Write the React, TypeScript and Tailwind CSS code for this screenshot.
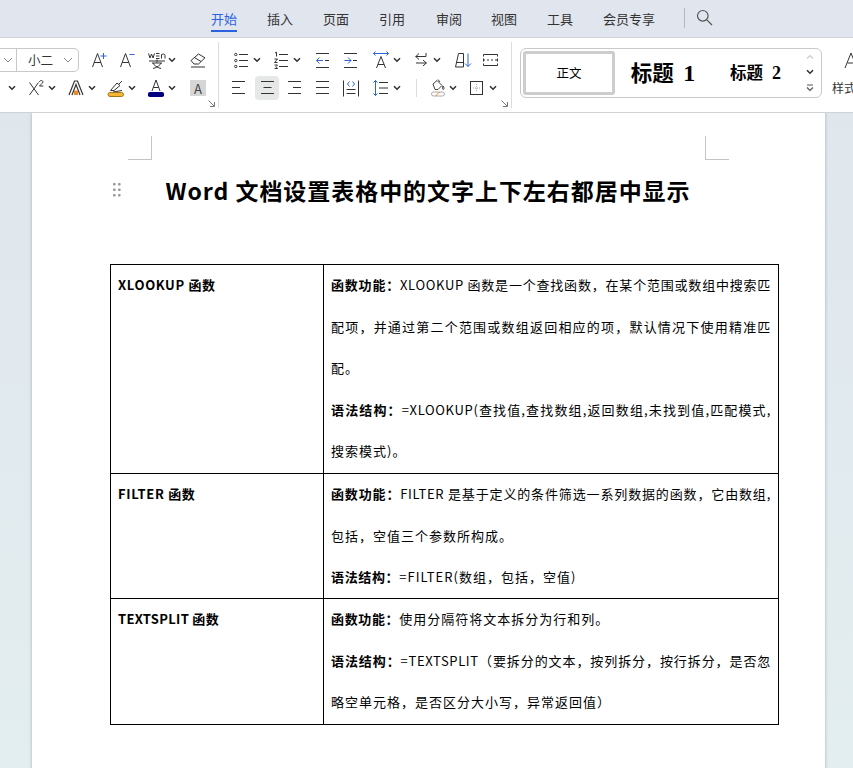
import React from "react";

const S = ({ w = 14, h = 20, children }: { w?: number; h?: number; children: React.ReactNode }) => (
  <svg width={w} height={h} viewBox={`0 0 ${w} ${h}`} fill="none" stroke="#333" strokeWidth="1" className="block shrink-0">
    {children}
  </svg>
);
const Caret = () => (
  <svg width="8" height="6" viewBox="0 0 8 6" fill="none" stroke="#333" strokeWidth="1.6" className="block shrink-0">
    <path d="M1 1.2 4 4.2 7 1.2" />
  </svg>
);
const Thin = () => (
  <svg width="10" height="6" viewBox="0 0 10 6" fill="none" stroke="#888" strokeWidth="1" className="block shrink-0">
    <path d="M1 1 5 5 9 1" />
  </svg>
);
const Lines = ({ d }: { d: string }) => (
  <S w={13}>
    <path d={d} />
  </S>
);

const Tab = ({ t, active, w }: { t: string; active?: boolean; w: string }) => (
  <div className={`relative h-[37px] flex items-center text-[13px] ${w} ${active ? "text-[#2a62e0]" : "text-[#333]"}`}>
    {t}
    {active && <div className="absolute left-0 right-0 top-[30px] h-[2px] bg-[#2a62e0]" />}
  </div>
);

const Launcher = () => (
  <svg width="7" height="7" viewBox="0 0 7 7" fill="none" stroke="#777" strokeWidth="1" className="absolute right-[3px] bottom-[1px]">
    <path d="M0.5 0.5 6 6M6.5 2v4.5H2" />
  </svg>
);

const Row = ({ children, cls = "" }: { children: React.ReactNode; cls?: string }) => (
  <div className={`flex items-center h-[24px] ${cls}`}>{children}</div>
);

const Line = ({ children, j }: { children: React.ReactNode; j?: boolean }) => (
  <div className={`h-[41.6px] leading-[41.6px] whitespace-nowrap ${j ? "text-justify [text-align-last:justify]" : ""}`}>{children}</div>
);
const B = ({ children }: { children: React.ReactNode }) => <span className="font-bold">{children}</span>;
const W = ({ children }: { children: React.ReactNode }) => <span className="tracking-[1px]">{children}</span>;

const Dots = () => (
  <svg width="8" height="14" viewBox="0 0 8 14" fill="#9a9a9a" className="block">
    {[1, 6.5, 12].map((y) => (
      <g key={y}>
        <rect x="0" y={y - 1} width="2.6" height="2.6" rx="0.8" />
        <rect x="5" y={y - 1} width="2.6" height="2.6" rx="0.8" />
      </g>
    ))}
  </svg>
);

export default function App() {
  return (
    <div
      className="h-[768px] w-[853px] overflow-hidden flex flex-col bg-gradient-to-b from-[#dfe5ec] to-[#e3eef0] text-black"
      style={{ fontFamily: '"Noto Sans CJK SC", "Noto Sans", sans-serif' }}
    >
      {/* tabs */}
      <div className="h-[38px] shrink-0 bg-[#e1e5ed] border-b border-[#cfd2d8] flex items-start pl-[211px]">
        <Tab t="开始" active w="w-[26px] mr-[30px]" />
        <Tab t="插入" w="w-[26px] mr-[30px]" />
        <Tab t="页面" w="w-[26px] mr-[30px]" />
        <Tab t="引用" w="w-[26px] mr-[31px]" />
        <Tab t="审阅" w="w-[26px] mr-[29px]" />
        <Tab t="视图" w="w-[26px] mr-[30px]" />
        <Tab t="工具" w="w-[26px] mr-[30px]" />
        <Tab t="会员专享" w="w-[52px] mr-[29px]" />
        <div className="w-px h-[20px] mt-[8px] bg-[#b5b8be] mr-[11px]" />
        <div className="mt-[9px]">
          <svg width="17" height="17" viewBox="0 0 17 17" fill="none" stroke="#555" strokeWidth="1.2" className="block">
            <circle cx="6.8" cy="6.8" r="5.3" />
            <path d="M10.8 10.8 16 16" />
          </svg>
        </div>
      </div>

      {/* ribbon */}
      <div className="h-[75px] shrink-0 bg-white border-b border-[#cfd2d6] flex overflow-hidden relative z-10">
        {/* group 1 */}
        <div className="relative w-[219px] shrink-0 border-r border-[#dcdcdc] my-[4px] pt-[6px]">
          <Row>
            <div className="w-[79px] h-[24px] shrink-0 border border-l-0 border-[#c8c8c8] rounded-r-[5px] flex items-center text-[12.5px] text-[#333]">
              <div className="w-[17px] h-full border-r border-[#c8c8c8] flex items-center pl-[3px]"><Thin /></div>
              <span className="ml-[11px] w-[35px]">小二</span>
              <Thin />
            </div>
            <div className="w-[12px] shrink-0" />
            <S w={16}>
              <path d="M1.5 17 6.500 3.500 11.500 17M3.200 12.500h6.600" />
              <path d="M9.500 6h6M12.500 3v6" stroke="#2a62e0" />
            </S>
            <div className="w-[12px] shrink-0" />
            <S w={16}>
              <path d="M1.500 17 6.500 3.500 11.500 17M3.200 12.500h6.600" />
              <path d="M10.500 4.500h5" stroke="#2a62e0" />
            </S>
            <div className="w-[12px] shrink-0" />
            <svg width="20" height="20" viewBox="0 0 20 20" fill="none" stroke="#333" className="block shrink-0">
              <path d="M1.500 3.500 3 8 4.500 4 6 8 7.500 3.500M9 3.500h3.500M9 6h3.500M9 8.500h3.500M14.500 8.500V4.500c1.500-.8 3.500-.5 3.500 1v3M2 11h16M10 9.500v3M5 13h10M6 13c1 2.500 4 4.500 8 5.500M14 13c-1 2.500-4 4.500-8 5.500" />
            </svg>
            <div className="w-[1px] shrink-0" />
            <Caret />
            <div className="w-[13px] shrink-0" />
            <svg width="18" height="18" viewBox="0 0 18 18" fill="none" stroke="#333" className="block shrink-0">
              <path d="M2 9.500 9.500 3l6.500 3.800-6.500 6.200H5zM5.500 6.500l6.500 4M2 16h14" />
            </svg>
          </Row>
          <Row cls="mt-[4px]">
            <div className="w-[8px] shrink-0" />
            <Caret />
            <div className="w-[12px] shrink-0" />
            <svg width="16" height="20" viewBox="0 0 16 20" fill="none" stroke="#333" className="block shrink-0">
              <path d="M1.500 4.500 10.500 17M10.500 4.500 1.500 17" />
              <path d="M11.500 4c0-2 3.500-2 3.500 0 0 1.300-2.500 2.200-3.500 4h3.800" />
            </svg>
            <div className="w-[4px] shrink-0" />
            <Caret />
            <div className="w-[11px] shrink-0" />
            <svg width="18" height="20" viewBox="0 0 18 20" fill="none" stroke="#333" className="block shrink-0">
              <path d="M2 17 7.500 3h3L16 17M5 17 9 6.500 13 17" strokeWidth="1.200" />
              <path d="M7 12.500h4V17H7z" fill="#e98a2b" stroke="none" />
            </svg>
            <div className="w-[3px] shrink-0" />
            <Caret />
            <div className="w-[11px] shrink-0" />
            <svg width="18" height="20" viewBox="0 0 18 20" fill="none" stroke="#333" className="block shrink-0">
              <path d="M3.500 12.500 10 5l3 2.500-6 5H3.500zM12 6l3-3M6 14l9-1.500" />
              <rect x="1" y="14.500" width="15.500" height="4" rx="2" fill="#f7b733" stroke="#a5761b" />
            </svg>
            <div className="w-[3px] shrink-0" />
            <Caret />
            <div className="w-[11px] shrink-0" />
            <svg width="18" height="20" viewBox="0 0 18 20" fill="none" stroke="#333" className="block shrink-0">
              <path d="M5 13 9 2l4 11M6.300 9.500h5.400" />
              <rect x="1" y="14" width="16" height="5" rx="1.800" fill="#000080" stroke="none" />
            </svg>
            <div className="w-[3px] shrink-0" />
            <Caret />
            <div className="w-[14px] shrink-0" />
            <div className="w-[16px] h-[16px] bg-[#d6d6d6] flex items-center justify-center text-[13px] text-[#444] leading-none">A</div>
          </Row>
          <Launcher />
        </div>

        {/* group 2 */}
        <div className="relative w-[293px] shrink-0 border-r border-[#dcdcdc] my-[4px] pt-[6px]">
          <Row>
            <div className="w-[15px] shrink-0" />
            <S w={14}>
              <path d="M5 4.500h9M5 10.500h9M5 16.500h9" />
              <circle cx="1.800" cy="4.500" r="1.200" />
              <circle cx="1.800" cy="10.500" r="1.200" />
              <circle cx="1.800" cy="16.500" r="1.200" />
            </S>
            <div className="w-[5px] shrink-0" />
            <Caret />
            <div className="w-[13px] shrink-0" />
            <S w={14}>
              <path d="M5 4.500h9M5 10.500h9M5 16.500h9M1 3l1.500-.8V6.500M.5 9h3L.5 12.500h3M.5 15h3l-1.500 1.500 1.500 2h-3" />
            </S>
            <div className="w-[5px] shrink-0" />
            <Caret />
            <div className="w-[15px] shrink-0" />
            <S w={13}>
              <path d="M0 3.500h13M9 10.500h4M0 17.500h13" />
              <path d="M7 10.500H.5M3.500 7.500l-3 3 3 3" stroke="#2a62e0" />
            </S>
            <div className="w-[15px] shrink-0" />
            <S w={13}>
              <path d="M0 3.500h13M9 10.500h4M0 17.500h13" />
              <path d="M.5 10.500H7M4 7.500l3 3-3 3" stroke="#2a62e0" />
            </S>
            <div className="w-[16px] shrink-0" />
            <S w={16}>
              <path d="M3.500 18 8 6.500 12.500 18M5 14.500h6" />
              <path d="M.5 3.500h15M2.500 1.500l-2 2 2 2M13.500 1.500l2 2-2 2" stroke="#2a62e0" />
            </S>
            <div className="w-[4px] shrink-0" />
            <Caret />
            <div className="w-[14px] shrink-0" />
            <S w={12}>
              <path d="M11 3v3.500H.5M4 3.500l-3.200 3 3.200 3M1 13h10.500M8 10l3.300 3-3.300 3" />
            </S>
            <div className="w-[6px] shrink-0" />
            <Caret />
            <div className="w-[14px] shrink-0" />
            <S w={17}>
              <path d="M.5 17 3.500 3.500h5V17h-8zM2 12.500h6.500" />
              <path d="M13 3.500V16.500M10 13.500l3 3 3-3" stroke="#2a62e0" />
            </S>
            <div className="w-[11px] shrink-0" />
            <S w={15}>
              <path d="M.5 4.500h14M.5 15.500h14M.5 4.500v2M14.500 4.500v2M.5 13.500v2M14.500 13.500v2M.5 10h1.500M4 10h2M8 10h2M12 10h2.500M.5 8.500v3M14.500 8.500v3" />
            </S>
          </Row>
          <Row cls="mt-[4px]">
            <div className="w-[13px] shrink-0" />
            <Lines d="M0 3.500h13M0 9.500h8M0 15.500h13" />
            <div className="w-[10px] shrink-0" />
            <div className="w-[24px] h-[24px] shrink-0 rounded-[4px] bg-[#e6e7e7] flex items-center justify-center">
              <Lines d="M0 3.500h13M2.500 9.500h8M0 15.500h13" />
            </div>
            <div className="w-[9px] shrink-0" />
            <Lines d="M0 3.500h13M5 9.500h8M0 15.500h13" />
            <div className="w-[15px] shrink-0" />
            <Lines d="M0 3.500h13M0 9.500h13M0 15.500h13" />
            <div className="w-[14px] shrink-0" />
            <S w={16}>
              <path d="M.5 2.500v16M15.500 2.500v16M3.500 11.500h9M3.500 15.500h9" />
              <path d="M6.500 3.500 4.500 6l2 2.500M9.500 3.500l2 2.500-2 2.500" stroke="#2a62e0" />
            </S>
            <div className="w-[14px] shrink-0" />
            <S w={15}>
              <path d="M6 4.500h9M6 10h9M6 15.500h9" />
              <path d="M2.500 2.500v15M.5 4.500l2-2 2 2M.5 15.500l2 2 2-2" stroke="#2a62e0" />
            </S>
            <div className="w-[5px] shrink-0" />
            <Caret />
            <div className="w-[15px] shrink-0" />
            <div className="w-px h-[18px] bg-[#dcdcdc] shrink-0" />
            <div className="w-[14px] shrink-0" />
            <svg width="14" height="20" viewBox="0 0 14 20" fill="none" stroke="#444" className="block shrink-0">
              <path d="M2 6 6 2.500l5 5-4 4H4zM7 1.500 9 4M12 8c1 1.500 1.500 3 .5 3.500S11 10 12 8z" />
              <rect x="0.500" y="14" width="13" height="4" rx="2" stroke="#aaa" />
              <path d="M4.500 18l4-4" stroke="#e98a2b" />
            </svg>
            <div className="w-[4px] shrink-0" />
            <Caret />
            <div className="w-[13px] shrink-0" />
            <svg width="13" height="14" viewBox="0 0 13 14" fill="none" stroke="#333" className="block shrink-0">
              <rect x="0.500" y="0.500" width="12" height="13" />
              <path d="M6.500 3v8M3 7h7" stroke="#aaa" strokeDasharray="1 1" />
            </svg>
            <div className="w-[6px] shrink-0" />
            <Caret />
          </Row>
          <Launcher />
        </div>

        {/* styles */}
        <div className="ml-[8px] mt-[10px] w-[302px] h-[50px] shrink-0 border border-[#c9c9c9] rounded-[6px] flex items-center pl-[2px]">
          <div className="w-[92px] h-[44px] border-[3px] border-[#cdcdcd] rounded-[3px] flex items-center justify-center text-[12.5px] text-black">
            正文
          </div>
          <div className="w-[93px] text-center text-[21.5px] font-bold whitespace-pre pl-[3px]" style={{ fontFamily: '"Liberation Serif", "Noto Sans CJK SC", serif' }}>
            标题 <span className="ml-[4px] text-[24px]">1</span>
          </div>
          <div className="w-[93px] text-center text-[16.5px] font-bold whitespace-pre pl-[2px]" style={{ fontFamily: '"Liberation Serif", "Noto Sans CJK SC", serif' }}>
            标题 <span className="ml-[5px] text-[18px]">2</span>
          </div>
          <div className="w-[10px] flex flex-col items-center gap-[9px] ml-[4px]">
            <svg width="8" height="6" viewBox="0 0 8 6" fill="none" stroke="#ccc" strokeWidth="1.2" className="block"><path d="M1 4.500 4 1.500l3 3" /></svg>
            <Caret />
            <svg width="8" height="8" viewBox="0 0 8 8" fill="none" stroke="#555" strokeWidth="1.2" className="block"><path d="M1 1h6M1 3.500 4 6.500l3-3" /></svg>
          </div>
        </div>

        {/* right cut off */}
        <div className="ml-[10px] mt-[8px] w-[30px] shrink-0 flex flex-col">
          <svg width="20" height="24" viewBox="0 0 20 24" fill="none" stroke="#333" className="block ml-[12px]">
            <path d="M1 22 7 7l6 15M3.500 17h7" />
          </svg>
          <div className="text-[12px] text-[#333] leading-[14px] mt-[11px] whitespace-nowrap">样式</div>
        </div>
      </div>

      {/* canvas */}
      <div className="flex-1 min-h-0 overflow-hidden pl-[32px]">
        <div className="relative w-[793px] h-[700px] bg-white shadow-[0_0_3px_rgba(120,130,140,0.6)] pt-[59px]">
          <div className="absolute left-[96px] top-[23px] w-[24px] h-[24px] border-r border-b border-[#c4c4c4]" />
          <div className="absolute left-[673px] top-[23px] w-[24px] h-[24px] border-l border-b border-[#c4c4c4]" />
          <div className="absolute left-[81px] top-[70px]"><Dots /></div>

          <h1 className="h-[36px] leading-[36px] text-center text-[23px] font-bold tracking-[0.95px] whitespace-nowrap -ml-[1px]">
            Word 文档设置表格中的文字上下左右都居中显示
          </h1>

          <table className="mt-[56px] ml-[78px] w-[668px] border-collapse text-[13px] tracking-[0.65px] table-fixed">
            <colgroup>
              <col className="w-[213px]" />
              <col className="w-[455px]" />
            </colgroup>
            <tbody>
              <tr className="h-[209px]">
                <td className="border border-black px-[7px] align-top font-bold"><div className="-mt-[1px]"><Line>XLOOKUP 函数</Line></div></td>
                <td className="border border-black px-[7px] align-top">
                  <div className="-mt-[1px]">
                    <Line j><B>函数功能：</B>XLOOKUP 函数是一个查找函数，在某个范围或数组中搜索匹</Line>
                    <Line j>配项，并通过第二个范围或数组返回相应的项，默认情况下使用精准匹</Line>
                    <Line><W>配。</W></Line>
                    <Line j><B>语法结构：</B>=XLOOKUP(查找值,查找数组,返回数组,未找到值,匹配模式,</Line>
                    <Line><W>搜索模式)。</W></Line>
                  </div>
                </td>
              </tr>
              <tr className="h-[125px]">
                <td className="border border-black px-[7px] align-top font-bold"><div className="-mt-[1px]"><Line>FILTER 函数</Line></div></td>
                <td className="border border-black px-[7px] align-top">
                  <div className="-mt-[1px]">
                    <Line j><B>函数功能：</B>FILTER 是基于定义的条件筛选一系列数据的函数，它由数组,</Line>
                    <Line><W>包括，空值三个参数所构成。</W></Line>
                    <Line><B>语法结构：</B><W>=FILTER(数组，包括，空值)</W></Line>
                  </div>
                </td>
              </tr>
              <tr className="h-[126px]">
                <td className="border border-black px-[7px] align-top font-bold"><div className="-mt-[1px]"><Line><span className="tracking-[0.3px]">TEXTSPLIT 函数</span></Line></div></td>
                <td className="border border-black px-[7px] align-top">
                  <div className="-mt-[1px]">
                    <Line><B>函数功能：</B><W>使用分隔符将文本拆分为行和列。</W></Line>
                    <Line j><B>语法结构：</B>=TEXTSPLIT（要拆分的文本，按列拆分，按行拆分，是否忽</Line>
                    <Line><W>略空单元格，是否区分大小写，异常返回值）</W></Line>
                  </div>
                </td>
              </tr>
            </tbody>
          </table>
        </div>
      </div>
    </div>
  );
}
